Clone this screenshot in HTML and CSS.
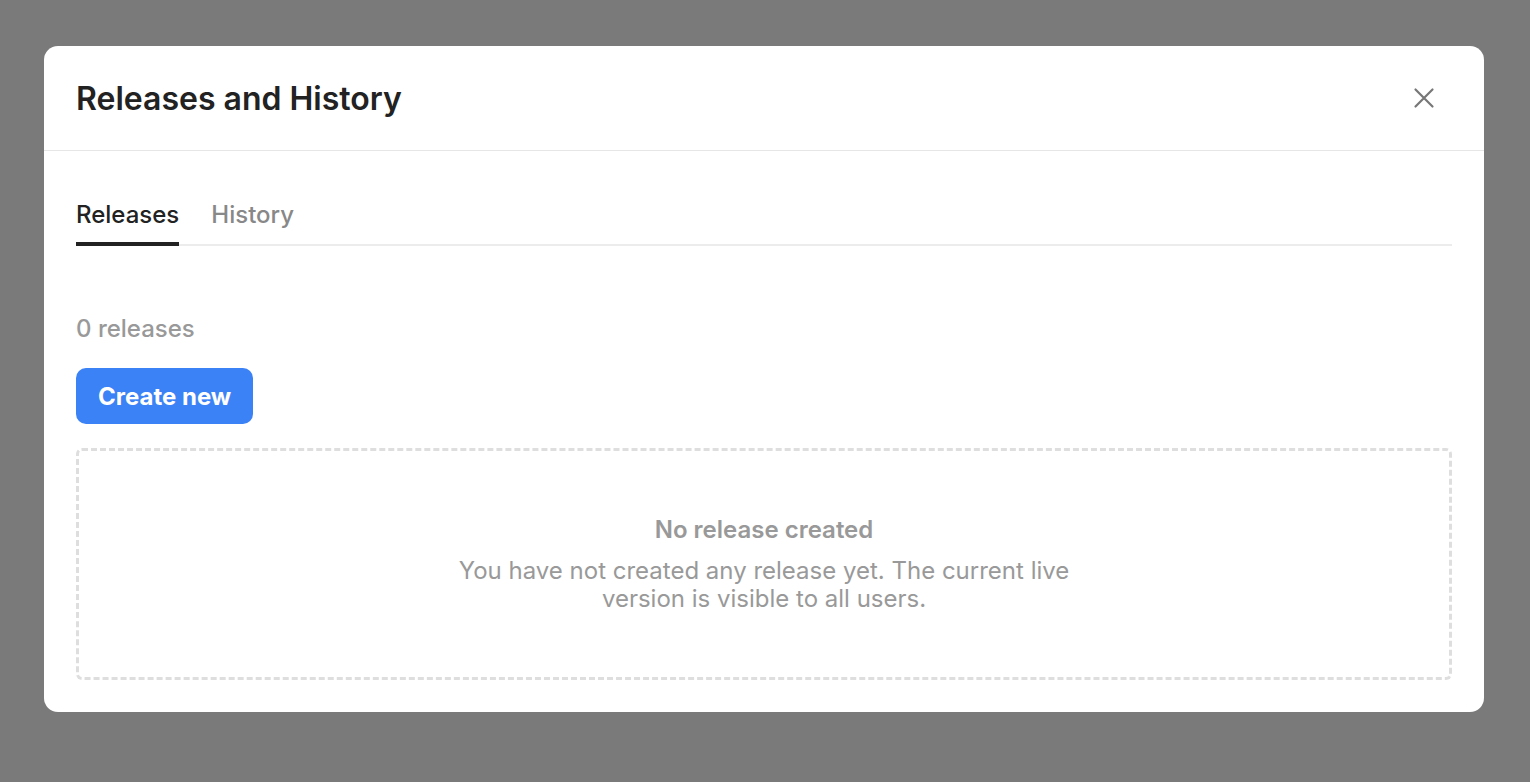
FILE: index.html
```html
<!DOCTYPE html>
<html lang="en">
<head>
    <meta charset="UTF-8">
    <meta name="viewport" content="width=device-width, initial-scale=1.0">
    <title>Releases and History</title>
    <link rel="stylesheet" href="styles.css">
</head>
<body>
<div class="overlay">
    <div class="modal">
        <div class="modal-header">
            <h1 class="modal-title">Releases and History</h1>
            <button class="close-btn" aria-label="Close">
                <svg width="24" height="24" viewBox="0 0 24 24" fill="none" stroke="currentColor" stroke-width="2.2" stroke-linecap="round">
                    <path d="M3.5 3.5l17 17M20.5 3.5l-17 17"/>
                </svg>
            </button>
        </div>
        <div class="modal-body">
            <div class="tabs">
                <div class="tab active">Releases</div>
                <div class="tab">History</div>
            </div>
            <div class="count">0 releases</div>
            <button class="primary-btn">Create new</button>
            <div class="empty">
                <div class="empty-title">No release created</div>
                <div class="empty-text">You have not created any release yet. The current live version is visible to all users.</div>
            </div>
        </div>
    </div>
</div>
</body>
</html>
```

FILE: styles.css
```css
body { margin: 0; font-family: Inter, "Noto Sans", sans-serif; background: #7a7a7a; }
.overlay { height: 782px; padding: 46px 46px 0 44px; box-sizing: border-box; }
.modal { background: #fff; border-radius: 14px; height: 666px; display: flex; flex-direction: column; overflow: hidden; }
.modal-header { display: flex; align-items: center; justify-content: space-between; height: 104px; padding: 0 48px 0 32px; border-bottom: 1px solid #e6e6e6; }
.modal-title { margin: 0; font-size: 32px; font-weight: 600; color: #222; }
.close-btn { background: none; border: none; padding: 0; color: #777; cursor: pointer; display: flex; }
.modal-body { padding: 32px; display: flex; flex-direction: column; align-items: flex-start; flex-grow: 1; }
.tabs { display: flex; gap: 32px; align-self: stretch; border-bottom: 2px solid #ececec; }
.tab { font-size: 24px; font-weight: 500; color: #888; line-height: 32px; padding: 16px 0 11px; border-bottom: 4px solid transparent; margin-bottom: -2px; }
.tab.active { color: #222; border-bottom-color: #222; }
.count { margin-top: 68px; font-size: 24px; line-height: 30px; font-weight: 500; color: #999; }
.primary-btn { margin-top: 24px; height: 56px; padding: 0 22px; border: none; border-radius: 10px; background: #3b82f6; color: #fff; font-family: inherit; font-size: 24px; font-weight: 700; cursor: pointer; }
.empty { margin-top: 24px; align-self: stretch; flex-grow: 1; border: 3px dashed #dedede; border-radius: 6px; display: flex; flex-direction: column; align-items: center; justify-content: center; text-align: center; }
.empty-title { font-size: 24px; line-height: 28px; font-weight: 600; color: #999; }
.empty-text { margin-top: 13px; max-width: 620px; font-size: 24px; line-height: 28px; color: #999; }
```
